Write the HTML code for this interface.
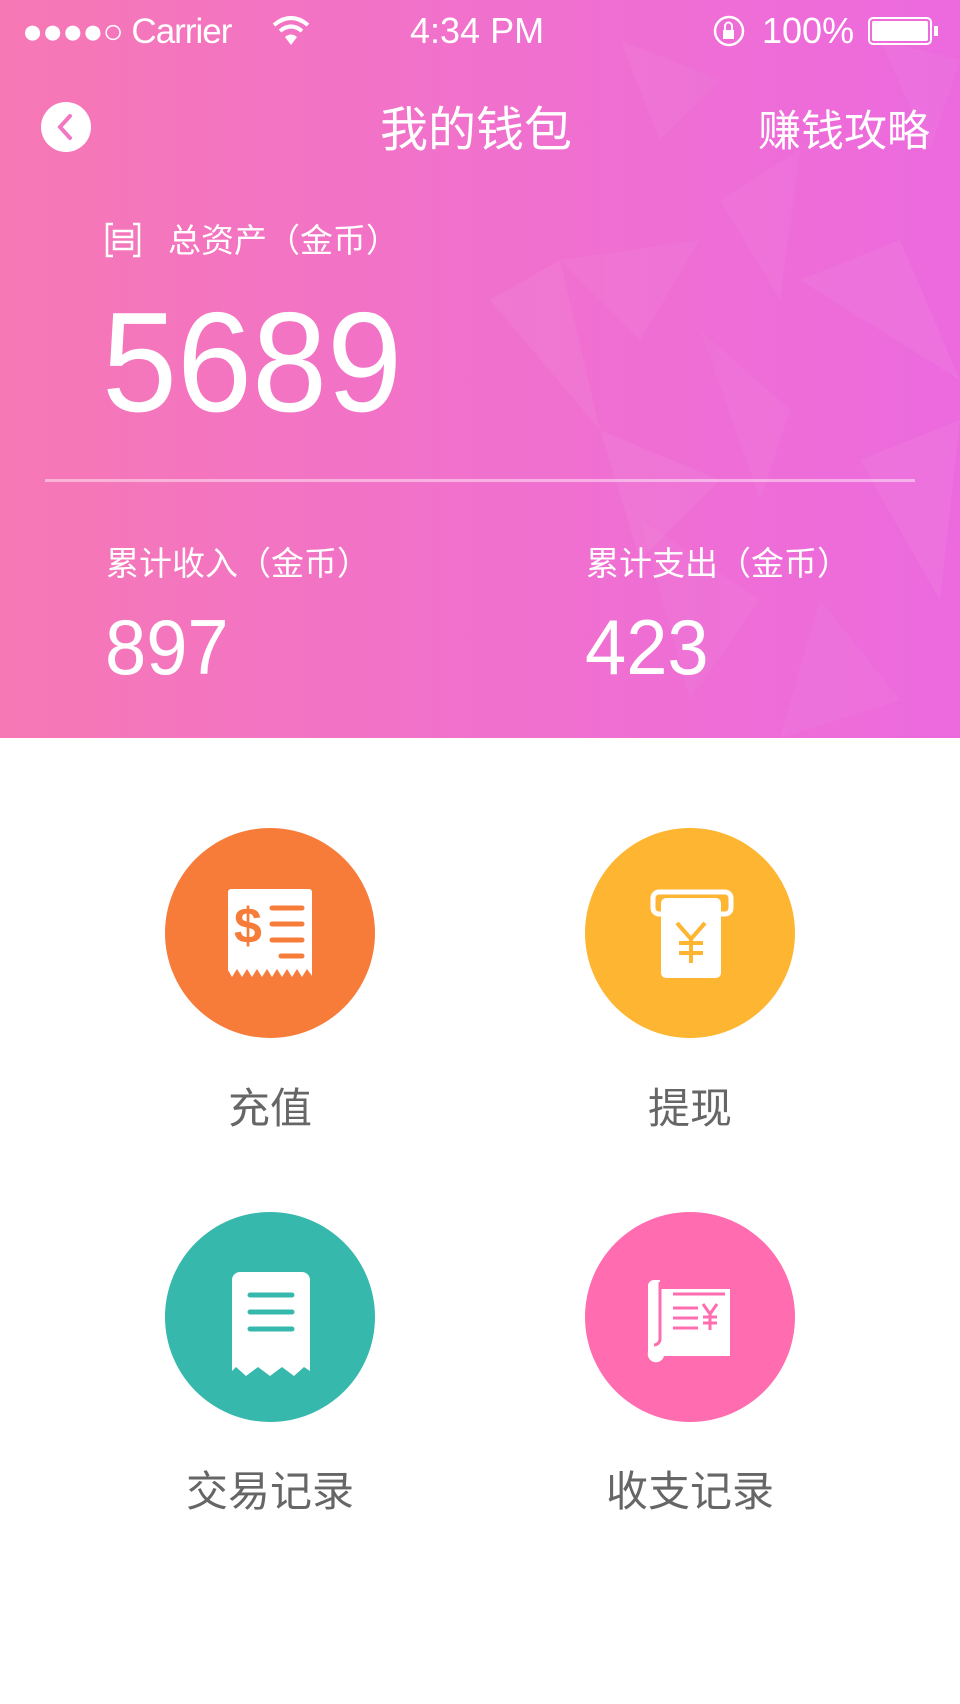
<!DOCTYPE html>
<html><head><meta charset="utf-8"><style>
*{margin:0;padding:0;box-sizing:border-box}
body{width:960px;height:1704px;background:#fff;font-family:"Liberation Sans","Noto Sans CJK SC",sans-serif;position:relative;overflow:hidden}
.hdr{position:absolute;left:0;top:0;width:960px;height:738px;background:linear-gradient(90deg,#f678b4 0%,#f070cf 55%,#ec6ade 100%);overflow:hidden}
.t{position:absolute;color:#fff;white-space:nowrap}
.lbl{position:absolute;color:#666;font-size:42px;width:300px;text-align:center}
.c{position:absolute;width:210px;height:210px;border-radius:50%}
</style></head><body>
<div class="hdr">
<svg width="960" height="738" style="position:absolute;left:0;top:0">
<g fill="#fff">
<polygon points="490,300 560,260 600,430" opacity=".05"/>
<polygon points="560,260 700,240 640,340" opacity=".04"/>
<polygon points="600,430 720,480 640,560" opacity=".05"/>
<polygon points="720,200 800,150 780,300" opacity=".04"/>
<polygon points="800,280 900,240 960,380" opacity=".05"/>
<polygon points="700,330 790,410 760,500" opacity=".04"/>
<polygon points="860,460 960,420 940,600" opacity=".05"/>
<polygon points="820,600 900,700 780,738" opacity=".04"/>
<polygon points="620,40 720,80 660,140" opacity=".04"/>
<polygon points="880,40 960,60 930,150" opacity=".04"/>
<polygon points="640,520 760,600 690,700" opacity=".04"/>
</g></svg>
<div class="t" style="left:22px;top:12px;font-size:35px;letter-spacing:-1px">●●●●○ Carrier</div>
<svg style="position:absolute;left:270px;top:14px" width="42" height="32" viewBox="0 0 42 32"><path d="M4 11 Q21 -3 38 11" stroke="#fff" stroke-width="4" fill="none"/><path d="M10 17 Q21 8 32 17" stroke="#fff" stroke-width="4" fill="none"/><path d="M15 23 L21 31 L27 23 Q21 18 15 23Z" fill="#fff"/></svg>
<div class="t" style="left:410px;top:10px;font-size:36px">4:34 PM</div>
<svg style="position:absolute;left:712px;top:14px" width="34" height="34"><circle cx="17" cy="17" r="14" stroke="#fff" stroke-width="2.5" fill="none"/><rect x="11" y="16" width="11" height="9" fill="#fff"/><path d="M13 16v-4a3.5 3.5 0 0 1 7 0v4" stroke="#fff" stroke-width="2" fill="none"/></svg>
<div class="t" style="left:762px;top:10px;font-size:36px">100%</div>
<div style="position:absolute;left:868px;top:17px;width:64px;height:28px;border:2px solid #fff;border-radius:5px;padding:2px"><div style="background:#fff;width:100%;height:100%;border-radius:2px"></div></div>
<div style="position:absolute;left:934px;top:26px;width:4px;height:10px;background:#fff"></div>
<svg style="position:absolute;left:41px;top:102px" width="50" height="50"><circle cx="25" cy="25" r="25" fill="#fff"/><path d="M29 14 L19 25 L29 36" stroke="#f277c2" stroke-width="4" fill="none" stroke-linecap="round"/></svg>
<div class="t" style="left:380px;top:90px;font-size:48px">我的钱包</div>
<div class="t" style="right:30px;top:97px;font-size:43px">赚钱攻略</div>
<svg style="position:absolute;left:105px;top:222px" width="36" height="36" viewBox="0 0 36 36" fill="none" stroke="#fff" stroke-width="2.5"><path d="M8 2H2V34H8M28 2H34V34H28"/><rect x="9" y="9" width="18" height="6"/><rect x="9" y="20" width="18" height="7"/></svg>
<div class="t" style="left:168px;top:214px;font-size:33px">总资产（金币）</div>
<div class="t" style="left:102px;top:292px;font-size:142px;line-height:1;transform:scaleX(.95);transform-origin:left">5689</div>
<div style="position:absolute;left:45px;top:479px;width:870px;height:3px;background:rgba(255,255,255,.45)"></div>
<div class="t" style="left:106px;top:537px;font-size:33px">累计收入（金币）</div>
<div class="t" style="left:586px;top:537px;font-size:33px">累计支出（金币）</div>
<div class="t" style="left:105px;top:608px;font-size:78px;line-height:1;transform:scaleX(.95);transform-origin:left">897</div>
<div class="t" style="left:585px;top:608px;font-size:78px;line-height:1;transform:scaleX(.95);transform-origin:left">423</div>
</div>

<div class="c" style="left:165px;top:828px;background:#f77c3a"><svg width="210" height="210">
<path d="M63 64a3 3 0 0 1 3-3h78a3 3 0 0 1 3 3V148L142 141 137 149 132 141 127 149 122 141 117 149 112 141 107 149 102 141 97 149 92 141 87 149 82 141 77 149 72 141 67 149 63 142Z" fill="#fff"/>
<text x="69" y="115" font-family="Liberation Sans" font-weight="bold" font-size="50" fill="#f77c3a">$</text>
<g stroke="#f77c3a" stroke-width="5" stroke-linecap="round"><path d="M107 80h30M107 96h30M107 112h30M116 128h21"/></g></svg></div>
<div class="c" style="left:585px;top:828px;background:#feb531"><svg width="210" height="210">
<rect x="68" y="64" width="78" height="22" rx="6" stroke="#fff" stroke-width="5" fill="none"/>
<rect x="76" y="70" width="60" height="80" rx="5" fill="#fff"/>
<g stroke="#feb531" stroke-width="4" fill="none"><path d="M92 95l14 16 14-16M106 111v24M94 115h24M94 125h24"/></g></svg></div>
<div class="lbl" style="left:120px;top:1075px">充值</div>
<div class="lbl" style="left:540px;top:1075px">提现</div>

<div class="c" style="left:165px;top:1212px;background:#36b8ad"><svg width="210" height="210">
<path d="M67 68a8 8 0 0 1 8-8h62a8 8 0 0 1 8 8V159L139 155 129 164 117 155 105 164 93 155 81 164 71 155 67 159Z" fill="#fff"/>
<g stroke="#36b8ad" stroke-width="5" stroke-linecap="round"><path d="M85 83h42M85 100h42M85 117h42"/></g></svg></div>
<div class="c" style="left:585px;top:1212px;background:#ff6cb0"><svg width="210" height="210">
<path d="M63 74a6 6 0 0 1 6-6h6v9h70v67h-66a8 8 0 0 1-16-4z" fill="#fff"/>
<path d="M75 70v57a6 6 0 0 1-6 6" stroke="#ff6cb0" stroke-width="3" fill="none"/>
<g stroke="#ff6cb0" stroke-width="3" fill="none"><path d="M88 82h52M88 96h25M88 106h25M88 116h25M118 92l7 10 7-10M125 102v16M118 105h14M118 111h14"/></g></svg></div>
<div class="lbl" style="left:120px;top:1458px">交易记录</div>
<div class="lbl" style="left:540px;top:1458px">收支记录</div>
</body></html>
